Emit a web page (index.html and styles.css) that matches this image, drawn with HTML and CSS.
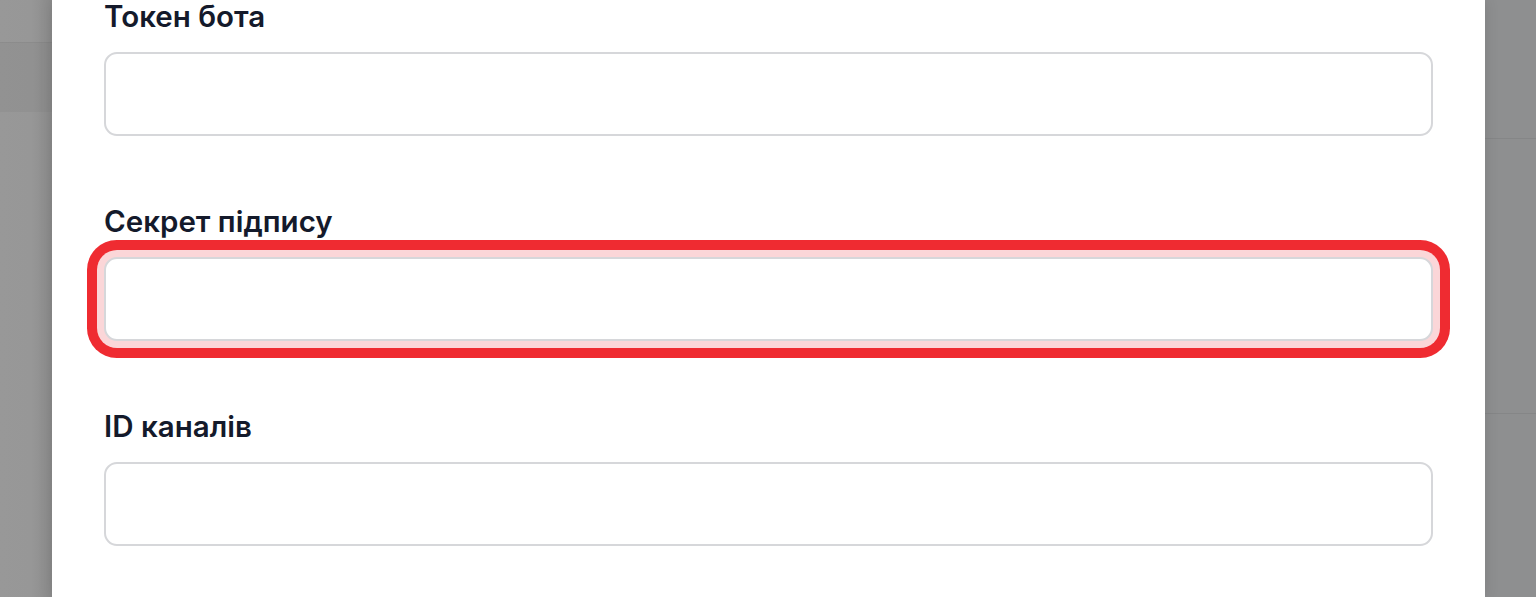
FILE: index.html
```html
<!DOCTYPE html>
<html lang="uk">
<head>
<meta charset="utf-8">
<title>Налаштування бота</title>
<link rel="stylesheet" href="styles.css">
</head>
<body>
<div class="screen">
  <aside class="backdrop backdrop-left">
    <div class="bl-top"></div>
    <div class="bl-band"></div>
    <div class="bl-rest"></div>
  </aside>
  <main class="modal">
    <div class="field">
      <label class="label" for="token">Токен бота</label>
      <input class="input" id="token" type="text">
    </div>
    <div class="field">
      <label class="label" for="secret">Секрет підпису</label>
      <input class="input input-error" id="secret" type="text">
    </div>
    <div class="field">
      <label class="label" for="channels">ID каналів</label>
      <input class="input" id="channels" type="text">
    </div>
  </main>
  <aside class="backdrop backdrop-right">
    <div class="br-row br-row-1"></div>
    <div class="br-row br-row-2"></div>
    <div class="br-row br-row-3"></div>
  </aside>
</div>
</body>
</html>
```

FILE: styles.css
```css
* { box-sizing: border-box; }
html, body {
  margin: 0;
  padding: 0;
  height: 100%;
  overflow: hidden;
}
body {
  font-family: Inter, "Noto Sans", "Liberation Sans", sans-serif;
  background: #939393;
}
.screen {
  display: grid;
  grid-template-columns: 52px 1433px 1fr;
  height: 597px;
}
.backdrop {
  display: flex;
  flex-direction: column;
}
.backdrop-left {
  background: linear-gradient(to right, #989898 0%, #979797 60%, #8b8b8b 100%);
}
.bl-top { height: 42px; }
.bl-band {
  height: 70px;
  background: rgba(120, 124, 124, 0.18);
  border-top: 1px solid rgba(110, 110, 110, 0.15);
}
.bl-rest { flex: 1; }

.backdrop-right {
  background: #8e8f90;
}
.br-row-1 { height: 139px; border-bottom: 1px solid #858687; }
.br-row-2 { height: 275px; border-bottom: 1px solid #858687; }
.br-row-3 { flex: 1; }

.modal {
  background: #ffffff;
  padding: 0 52px;
  display: flex;
  flex-direction: column;
  gap: 67px;
  box-shadow: 0 0 14px rgba(0, 0, 0, 0.12);
  position: relative;
  z-index: 1;
}
.field {
  display: flex;
  flex-direction: column;
  gap: 18px;
}
.field:first-child {
  margin-top: -2px;
}
.label {
  font-size: 29.5px;
  line-height: 36px;
  font-weight: 600;
  color: #141a2b;
  letter-spacing: 0;
}
.input {
  display: block;
  width: 100%;
  height: 84px;
  border: 2px solid #d6d7da;
  border-radius: 13px;
  background: #ffffff;
  font: inherit;
  outline: none;
}
.input-error {
  box-shadow: 0 0 0 7px #fbd6d8, 0 0 0 17px #ef2b31;
}
```
